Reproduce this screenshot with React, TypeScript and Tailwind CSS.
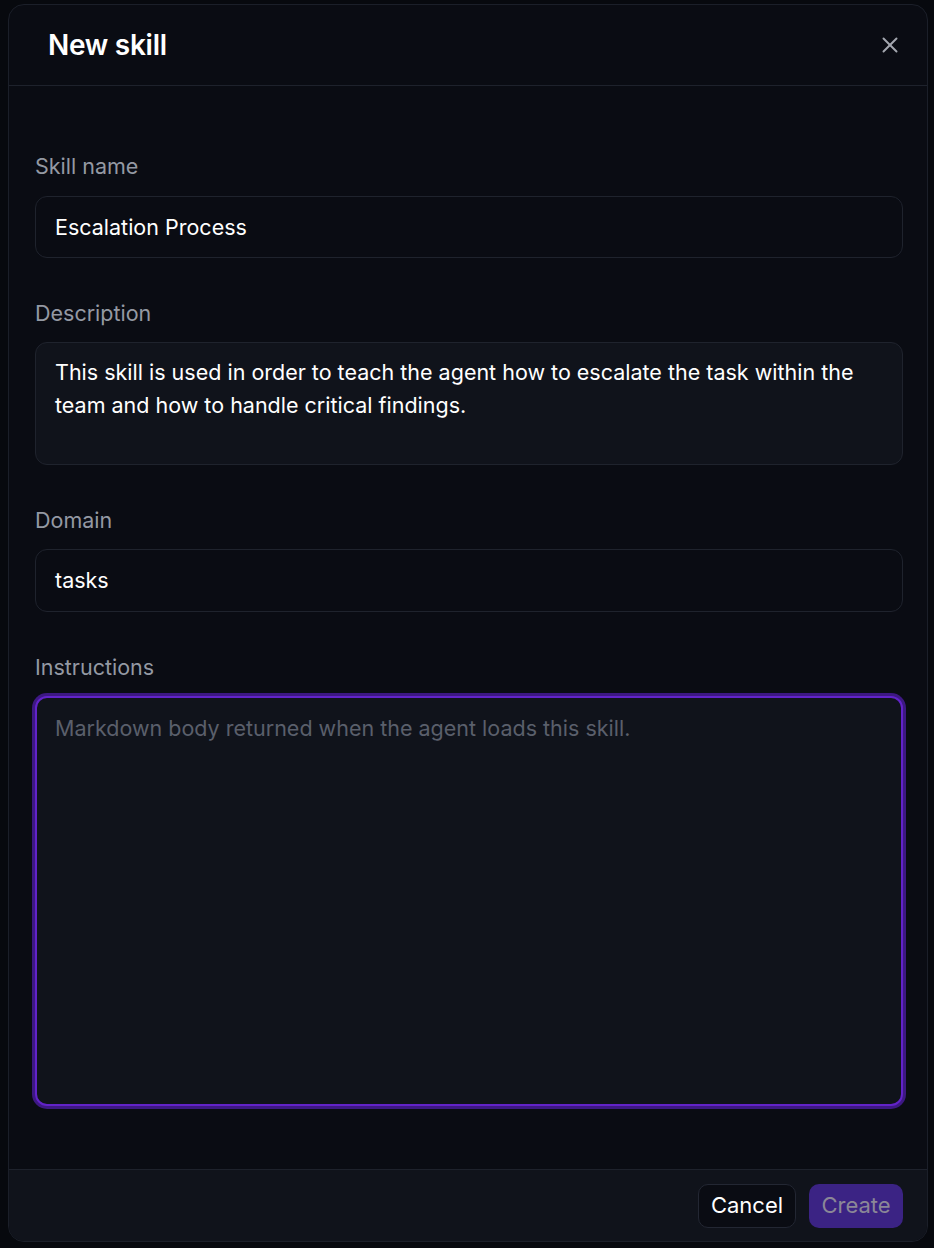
import React from 'react';

export default function App() {
    return (
        <div className="min-h-[1248px] w-full bg-[#07090e] pt-[4px] pl-[8px] pr-[6px] pb-[6px]" style={{ fontFamily: 'Inter, "Noto Sans", sans-serif' }}>
            <div className="flex h-[1238px] w-[920px] flex-col overflow-hidden rounded-[16px] border border-[#1b1f29] bg-[#0a0c13]">
                {/* Header */}
                <div className="flex h-[81px] shrink-0 items-center justify-between border-b border-[#1e222c] pl-[39px] pr-[24px]">
                    <h2 className="text-[28px] font-semibold tracking-[-0.01em] text-white">New skill</h2>
                    <button className="flex h-[26px] w-[26px] items-center justify-center text-[#a3a7af]">
                        <svg width="26" height="26" viewBox="0 0 24 24" fill="none" stroke="currentColor" strokeWidth="1.8" strokeLinecap="round">
                            <path d="M18 6 6 18" />
                            <path d="m6 6 12 12" />
                        </svg>
                    </button>
                </div>

                {/* Body */}
                <div className="flex flex-1 flex-col pl-[26px] pr-[24px] pt-[66px]">
                    <label className="text-[21.5px] leading-[28px] text-[#9499a3]">Skill name</label>
                    <div className="mt-[16px] flex h-[62px] items-center rounded-[12px] border border-[#1f232d] bg-[#0a0c13] px-[19px] text-[21.5px] text-white">
                        Escalation Process
                    </div>

                    <label className="mt-[41px] text-[21.5px] leading-[28px] text-[#9499a3]">Description</label>
                    <div className="mt-[15px] h-[123px] rounded-[12px] border border-[#1f232d] bg-[#10131b] px-[19px] pt-[13px] text-[21.5px] leading-[33px] text-white">
                        This skill is used in order to teach the agent how to escalate the task within the team and how to handle critical findings.
                    </div>

                    <label className="mt-[41px] text-[21.5px] leading-[28px] text-[#9499a3]">Domain</label>
                    <div className="mt-[15px] flex h-[63px] items-center rounded-[12px] border border-[#1f232d] bg-[#0a0c13] px-[19px] text-[21.5px] text-white">
                        tasks
                    </div>

                    <label className="mt-[41px] text-[21.5px] leading-[28px] text-[#9499a3]">Instructions</label>
                    <div className="mt-[15px] h-[410px] rounded-[12px] border-2 border-[#6223c9] bg-[#10131b] px-[18px] pt-[14px] text-[21.5px] leading-[32px] text-[#5a5f6b] ring-[3px] ring-[#3d1883]">
                        Markdown body returned when the agent loads this skill.
                    </div>
                </div>

                {/* Footer */}
                <div className="flex h-[72px] shrink-0 items-center justify-end gap-[13px] border-t border-[#1e222c] bg-[#10131b] pr-[24px]">
                    <button className="h-[44px] w-[98px] rounded-[10px] border border-[#232733] bg-[#0a0c13] text-[22px] text-white">
                        Cancel
                    </button>
                    <button className="h-[44px] w-[94px] rounded-[10px] bg-[#3b2384] text-[22px] text-[#8b8797]">
                        Create
                    </button>
                </div>
            </div>
        </div>
    );
}
